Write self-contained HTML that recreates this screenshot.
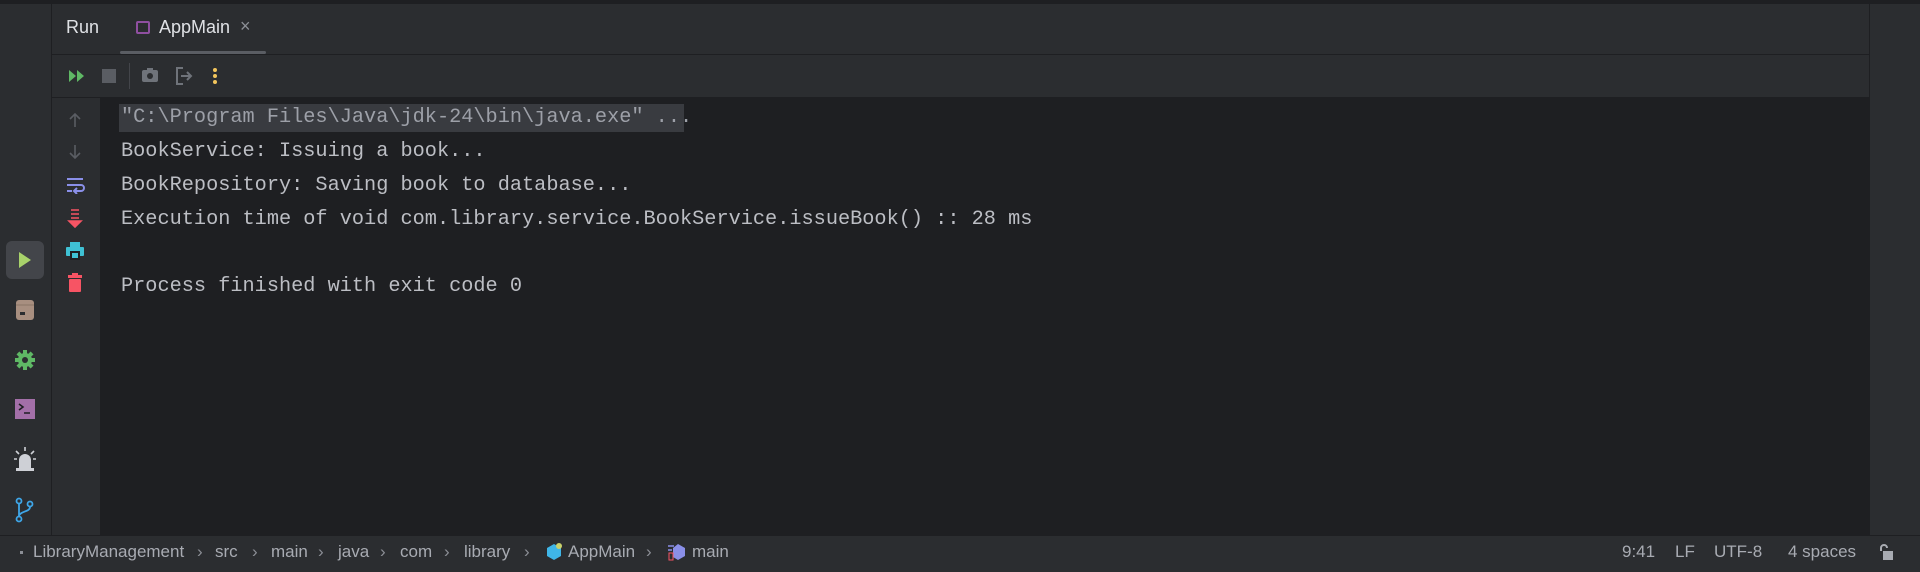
<!DOCTYPE html>
<html><head><meta charset="utf-8"><style>
*{margin:0;padding:0;box-sizing:border-box}
body{width:1920px;height:572px;background:#2b2d30;position:relative;overflow:hidden;font-family:"Liberation Sans",sans-serif;color:#dfe1e5}
.a{position:absolute}
.mono{font-family:"Liberation Mono",monospace;font-size:20.25px;color:#bcbec4;white-space:pre;line-height:34px}
.st{font-size:17px;color:#a8abb2;top:541px;line-height:22px}
.chev{color:#8c8f96;font-size:17px}
</style></head><body>
<div class="a" style="left:0;top:0;width:1920px;height:4px;background:#1e1f22"></div>
<div class="a" style="left:51px;top:4px;width:1px;height:531px;background:#1e1f22"></div>
<div class="a" style="left:1869px;top:4px;width:1px;height:531px;background:#1e1f22"></div>
<div class="a" style="left:1870px;top:4px;width:50px;height:531px;background:#2b2d30"></div>
<!-- tab bar -->
<div class="a" style="left:66px;top:17px;font-size:18px;color:#dfe1e5">Run</div>
<div class="a" style="left:136px;top:21px;width:14px;height:13px;border:2px solid #8f4fa0;border-radius:2px"></div>
<div class="a" style="left:159px;top:17px;font-size:18px;color:#dfe1e5">AppMain</div>
<div class="a" style="left:240px;top:16px;font-size:18px;color:#8c8f96">×</div>
<div class="a" style="left:120px;top:51px;width:146px;height:3px;background:#5a5d63;border-radius:2px"></div>
<div class="a" style="left:52px;top:54px;width:1817px;height:1px;background:#1e1f22"></div>
<!-- toolbar -->
<svg class="a" style="left:68px;top:69px" width="18" height="14"><path d="M1 1L8 7L1 13ZM9 1L16 7L9 13Z" fill="#5fb865"/></svg>
<div class="a" style="left:102px;top:69px;width:14px;height:14px;background:#5a5d63"></div>
<div class="a" style="left:129px;top:63px;width:1px;height:26px;background:#43454a"></div>
<svg class="a" style="left:141px;top:67px" width="18" height="16"><rect x="1" y="3" width="16" height="12" rx="2" fill="#6f737a"/><rect x="6" y="1" width="6" height="3" fill="#6f737a"/><circle cx="9" cy="9" r="3" fill="#2b2d30"/></svg>
<svg class="a" style="left:174px;top:66px" width="20" height="20"><path d="M9 2H3V18H9" fill="none" stroke="#6f737a" stroke-width="2"/><path d="M7 10H17M13 6L17 10L13 14" fill="none" stroke="#6f737a" stroke-width="2"/></svg>
<svg class="a" style="left:212px;top:67px" width="6" height="18"><circle cx="3" cy="3" r="2" fill="#f2c55c"/><circle cx="3" cy="9" r="2" fill="#f2c55c"/><circle cx="3" cy="15" r="2" fill="#f2c55c"/></svg>
<div class="a" style="left:52px;top:97px;width:1817px;height:1px;background:#1e1f22"></div>
<!-- gutter & console -->
<div class="a" style="left:52px;top:98px;width:48px;height:437px;background:#2b2d30"></div>
<div class="a" style="left:100px;top:98px;width:1769px;height:437px;background:#1e1f22"></div>
<svg class="a" style="left:66px;top:111px" width="18" height="18"><path d="M9 16V3M4 8L9 3L14 8" fill="none" stroke="#5a5d63" stroke-width="1.6"/></svg>
<svg class="a" style="left:66px;top:143px" width="18" height="18"><path d="M9 2V15M4 10L9 15L14 10" fill="none" stroke="#5a5d63" stroke-width="1.6"/></svg>
<svg class="a" style="left:65px;top:176px" width="20" height="18"><path d="M2 3H18M2 9H16a3 3 0 0 1 0 6H10M12 12L9 15L12 18M2 15H7" fill="none" stroke="#8a8fe8" stroke-width="2"/></svg>
<svg class="a" style="left:67px;top:208px" width="16" height="20"><path d="M4 2H12M4 6H12M4 10H12M2 13L8 19L14 13Z" fill="#f75464" stroke="#f75464" stroke-width="1.6"/></svg>
<svg class="a" style="left:65px;top:241px" width="20" height="20"><rect x="5" y="1" width="10" height="5" fill="#3fc1d4"/><rect x="1" y="6" width="18" height="9" rx="1" fill="#3fc1d4"/><rect x="6" y="11" width="8" height="7" fill="#3fc1d4" stroke="#1e1f22" stroke-width="2"/></svg>
<svg class="a" style="left:67px;top:273px" width="16" height="20"><rect x="1" y="2" width="14" height="3" fill="#f75464"/><rect x="5" y="0" width="6" height="3" fill="#f75464"/><rect x="2" y="6" width="12" height="13" rx="1" fill="#f75464"/></svg>
<div class="a" style="left:119px;top:104px;width:565px;height:28px;background:#393b40"></div>
<div class="a mono" style="left:121px;top:101px;color:#9da0a8">"C:\Program Files\Java\jdk-24\bin\java.exe" ...</div>
<div class="a mono" style="left:121px;top:135px">BookService: Issuing a book...</div>
<div class="a mono" style="left:121px;top:169px">BookRepository: Saving book to database...</div>
<div class="a mono" style="left:121px;top:203px">Execution time of void com.library.service.BookService.issueBook() :: 28 ms</div>
<div class="a mono" style="left:121px;top:270px">Process finished with exit code 0</div>
<!-- left strip -->
<div class="a" style="left:6px;top:241px;width:38px;height:38px;background:#43454a;border-radius:6px"></div>
<svg class="a" style="left:18px;top:251px" width="14" height="18"><path d="M1 1L13 9L1 17Z" fill="#a8d26b"/></svg>
<svg class="a" style="left:15px;top:299px" width="20" height="22"><rect x="1" y="1" width="18" height="20" rx="3" fill="#a88f80"/><rect x="5" y="13" width="5" height="3" fill="#2b2d30"/><path d="M1 6H19" stroke="#8a7466" stroke-width="1"/></svg>
<svg class="a" style="left:14px;top:349px" width="22" height="22"><g fill="#5fb865"><circle cx="11" cy="11" r="7"/><rect x="9" y="1" width="4" height="20"/><rect x="1" y="9" width="20" height="4"/><rect x="9" y="1" width="4" height="20" transform="rotate(45 11 11)"/><rect x="9" y="1" width="4" height="20" transform="rotate(-45 11 11)"/></g><circle cx="11" cy="11" r="3" fill="#2b2d30"/></svg>
<svg class="a" style="left:14px;top:398px" width="22" height="22"><rect x="1" y="1" width="20" height="20" fill="#a36fa8"/><path d="M5 6L9 9L5 12M10 15H16" fill="none" stroke="#1e1f22" stroke-width="1.6"/></svg>
<svg class="a" style="left:13px;top:446px" width="24" height="26"><path d="M6 22V14a6 6 0 0 1 12 0V22Z" fill="#ced0d6"/><rect x="3" y="22" width="18" height="3" fill="#ced0d6"/><path d="M12 1V5M3 5L6 8M21 5L18 8M1 13H4M20 13H23" stroke="#ced0d6" stroke-width="1.6"/></svg>
<svg class="a" style="left:15px;top:497px" width="20" height="26"><circle cx="4" cy="4" r="2.5" fill="none" stroke="#3ea6e8" stroke-width="1.8"/><circle cx="4" cy="22" r="2.5" fill="none" stroke="#3ea6e8" stroke-width="1.8"/><circle cx="15" cy="7" r="2.5" fill="none" stroke="#3ea6e8" stroke-width="1.8"/><path d="M4 7V19M15 10C15 15 5 14 4 19" fill="none" stroke="#3ea6e8" stroke-width="1.8"/></svg>
<!-- status bar -->
<div class="a" style="left:0;top:535px;width:1920px;height:1px;background:#1e1f22"></div>
<div class="a" style="left:20px;top:551px;width:3px;height:3px;background:#8c8f96"></div>
<div class="a st" style="left:33px">LibraryManagement</div>
<div class="a st chev" style="left:197px">›</div>
<div class="a st" style="left:215px">src</div>
<div class="a st chev" style="left:252px">›</div>
<div class="a st" style="left:271px">main</div>
<div class="a st chev" style="left:318px">›</div>
<div class="a st" style="left:338px">java</div>
<div class="a st chev" style="left:380px">›</div>
<div class="a st" style="left:400px">com</div>
<div class="a st chev" style="left:444px">›</div>
<div class="a st" style="left:464px">library</div>
<div class="a st chev" style="left:524px">›</div>
<svg class="a" style="left:545px;top:542px" width="18" height="20"><path d="M9 2L16 6V14L9 18L2 14V6Z" fill="#3fb6e8"/><circle cx="14" cy="4" r="3" fill="#c8d06b"/></svg>
<div class="a st" style="left:568px">AppMain</div>
<div class="a st chev" style="left:646px">›</div>
<svg class="a" style="left:666px;top:542px" width="22" height="20"><path d="M12 2L19 6V14L12 18L7 15V6Z" fill="#8a8fe8"/><path d="M2 4H8M2 8H6" stroke="#8a8fe8" stroke-width="1.5"/><rect x="3" y="11" width="4" height="7" fill="none" stroke="#f75464" stroke-width="1"/></svg>
<div class="a st" style="left:692px">main</div>
<div class="a st" style="left:1622px">9:41</div>
<div class="a st" style="left:1675px">LF</div>
<div class="a st" style="left:1714px">UTF-8</div>
<div class="a st" style="left:1788px">4 spaces</div>
<svg class="a" style="left:1878px;top:543px" width="16" height="18"><path d="M3 8V5a3 3 0 0 1 6 0" fill="none" stroke="#a8abb2" stroke-width="2"/><rect x="5" y="8" width="10" height="9" fill="#a8abb2"/></svg>
</body></html>
